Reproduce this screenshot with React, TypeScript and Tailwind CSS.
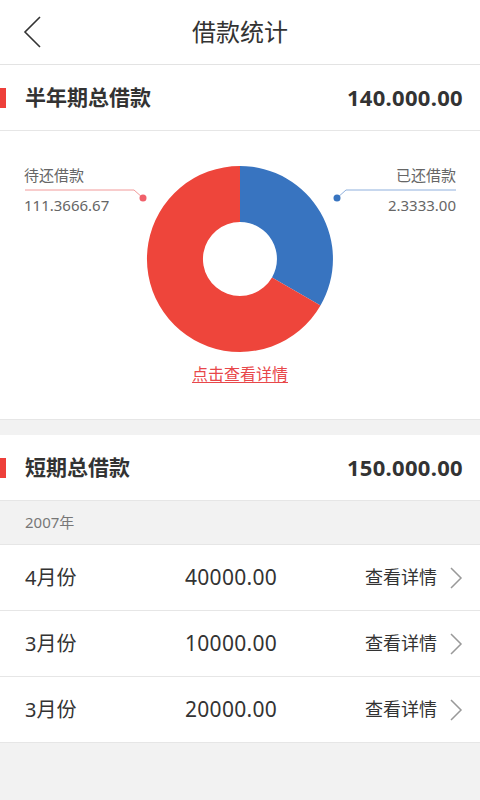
import React from 'react';

const font = { fontFamily: '"Noto Sans", "Noto Sans CJK SC", sans-serif' };

interface MonthRow {
  month: string;
  amount: string;
}

const rows: MonthRow[] = [
  { month: '4月份', amount: '40000.00' },
  { month: '3月份', amount: '10000.00' },
  { month: '3月份', amount: '20000.00' },
];

const SectionHeader: React.FC<{ title: string; amount: string }> = ({ title, amount }) => (
  <div className="h-[66px] bg-white border-b border-[#e6e6e6] flex items-center pr-[17px]">
    <div className="w-[6px] h-[20px] bg-[#ee3f3a]" />
    <span className="ml-[19px] text-[21px] font-bold text-[#333]">{title}</span>
    <span className="ml-auto text-[22px] font-bold text-[#333] tracking-[0.3px]">{amount}</span>
  </div>
);

const Donut: React.FC = () => (
  <div className="relative h-[289px] bg-white border-b border-[#e6e6e6]">
    <svg width="480" height="240" className="block">
      <path d="M240 35 A93 93 0 0 1 320.5 174.5 L272 146.5 A37 37 0 0 0 240 91 Z" fill="#3874c0" />
      <path d="M320.5 174.5 A93 93 0 1 1 240 35 L240 91 A37 37 0 1 0 272 146.5 Z" fill="#ee453b" />
      <polyline points="25,59 134,59 143,67" fill="none" stroke="#f29a9a" strokeWidth="1" />
      <circle cx="143" cy="67" r="3.5" fill="#f0606a" />
      <polyline points="456,59 346,59 337,67" fill="none" stroke="#8fb0dd" strokeWidth="1" />
      <circle cx="337" cy="67" r="3.5" fill="#3874c0" />
    </svg>
    <div className="absolute left-[24px] top-[34px] text-[15px] leading-[20px] text-[#666]">待还借款</div>
    <div className="absolute left-[24px] top-[64px] text-[15px] leading-[20px] text-[#666]">111.3666.67</div>
    <div className="absolute right-[24px] top-[34px] text-[15px] leading-[20px] text-[#666]">已还借款</div>
    <div className="absolute right-[24px] top-[64px] text-[15px] leading-[20px] text-[#666]">2.3333.00</div>
    <div className="absolute left-0 right-0 top-[231px] text-center">
      <span className="text-[16px] text-[#e8474a] underline underline-offset-2">点击查看详情</span>
    </div>
  </div>
);

const App: React.FC = () => {
  return (
    <div className="w-[480px] min-h-[800px] bg-[#f2f2f2]" style={font}>
      {/* Top bar */}
      <div className="relative h-[65px] bg-white border-b border-[#e3e3e3] flex items-center justify-center">
        <svg className="absolute left-[22px] top-[16px]" width="20" height="32" viewBox="0 0 20 32">
          <polyline points="18,1 3,16 18,31" fill="none" stroke="#333" strokeWidth="1.6" />
        </svg>
        <span className="text-[24px] text-[#333]">借款统计</span>
      </div>

      <SectionHeader title="半年期总借款" amount="140.000.00" />
      <Donut />

      <div className="h-[15px]" />

      <SectionHeader title="短期总借款" amount="150.000.00" />
      <div className="h-[44px] flex items-center px-[25px] border-b border-[#e6e6e6]">
        <span className="text-[15px] text-[#777]">2007年</span>
      </div>

      <div className="bg-white">
        {rows.map((r, i) => (
          <div key={i} className="h-[66px] flex items-center border-b border-[#e6e6e6] pl-[25px] pr-[17px]">
            <span className="w-[160px] text-[20px] text-[#333]">{r.month}</span>
            <span className="w-[92px] text-right text-[21px] text-[#333] tracking-[0.3px]">{r.amount}</span>
            <span className="ml-auto text-[18px] text-[#333]">查看详情</span>
            <svg className="ml-[13px]" width="13" height="22" viewBox="0 0 13 22">
              <polyline points="1,1 11,11 1,21" fill="none" stroke="#999" strokeWidth="1.5" />
            </svg>
          </div>
        ))}
      </div>
    </div>
  );
};

export default App;
